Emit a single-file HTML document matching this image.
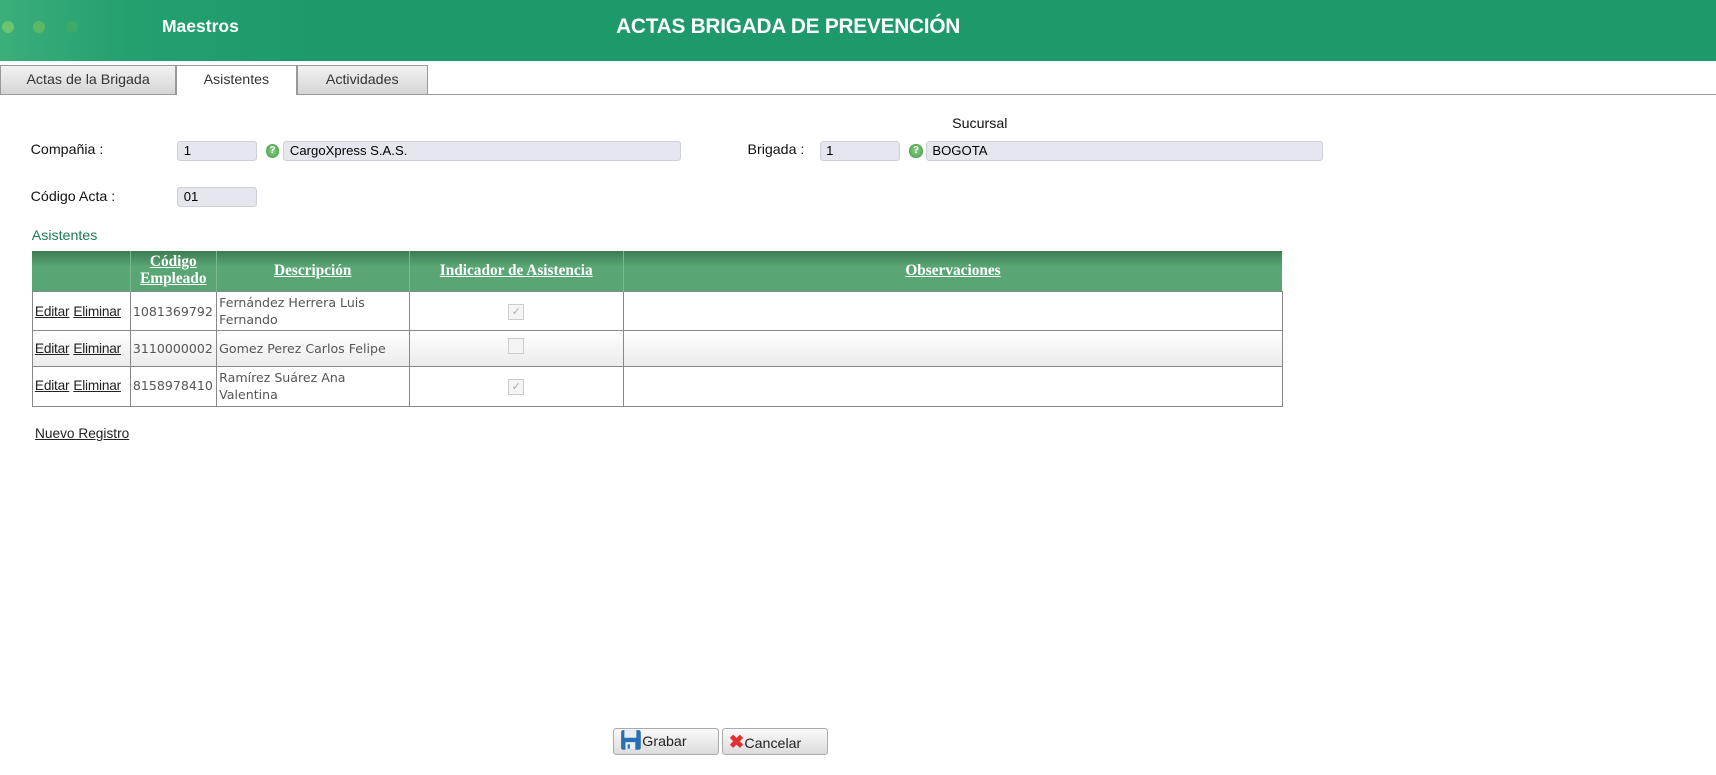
<!DOCTYPE html>
<html><head><meta charset="utf-8"><style>
html,body{margin:0;padding:0;background:#fff;overflow:hidden}
body{width:1716px;height:775px}
#w{zoom:1.0944;width:1568px;height:708px;position:relative;font-family:"Liberation Sans",sans-serif;font-size:13px;color:#111}
.a{position:absolute}
#hd{left:0;top:0;width:1568px;height:56px;background:linear-gradient(90deg,#3cae7a 0,#22a06e 120px,#1e9a6a 300px,#1e9a6a)}
.dot{width:11px;height:11px;border-radius:50%;top:19px}
.tab{top:59px;height:27px;border:1px solid #999;border-bottom:none;box-sizing:border-box;text-align:center;line-height:27px;font-size:13px;color:#333;background:linear-gradient(#f2f2f2,#d6d6d6)}
.inp{height:18px;background:#e6e6ef;border:1px solid #cfcfd8;border-radius:3px;box-sizing:border-box;font-size:12px;line-height:16px;padding-left:5px;color:#000}
.q{width:12px;height:12px;border-radius:50%;background:radial-gradient(#8fd08a,#3b9a3e);color:#fff;font-size:9px;font-weight:bold;text-align:center;line-height:12px}
table{border-collapse:collapse;position:absolute;left:29px;top:229px;width:1143px;table-layout:fixed}
th{background:linear-gradient(#3d7c52,#5aa774 40%,#57a572);color:#fff;font-family:"Liberation Serif",serif;font-weight:bold;font-size:14px;text-decoration:underline;height:37px;padding:0;border-left:1px solid #7ab890;line-height:15px}
td{border:1px solid #888;font-family:"DejaVu Sans",sans-serif;font-size:11.5px;color:#555;padding:0 2px;line-height:16px;overflow:hidden}
td a{color:#222;text-decoration:underline;font-family:"Liberation Sans",sans-serif;font-size:12.5px;letter-spacing:-0.2px}
.cb{display:inline-block;width:13px;height:13px;border:1px solid #ccc;background:#f4f4f4;color:#aaa;font-size:10px;line-height:13px;text-align:center}
.btn{top:665px;height:25px;border:1px solid #aaa;border-radius:3px;box-sizing:border-box;background:linear-gradient(#fafafa,#dcdcdc);font-size:13px;line-height:24px;color:#222}
</style></head><body><div id="w">
<div id="hd" class="a"></div>
<div class="a dot" style="left:2px;background:#6cc46e"></div>
<div class="a dot" style="left:30px;background:#5cb865"></div>
<div class="a dot" style="left:60px;background:#3eaa68"></div>
<div class="a" style="left:148px;top:15px;color:#fff;font-weight:bold;font-size:16px">Maestros</div>
<div class="a" style="left:563px;top:14px;color:#fff;font-weight:bold;font-size:19px;letter-spacing:-0.2px">ACTAS BRIGADA DE PREVENCIÓN</div>
<div class="a" style="left:0;top:86px;width:1568px;height:1px;background:#999"></div>
<div class="a tab" style="left:0;width:161px">Actas de la Brigada</div>
<div class="a tab" style="left:161px;width:110px;background:#fff;height:28px">Asistentes</div>
<div class="a tab" style="left:271px;width:120px">Actividades</div>
<div class="a" style="left:870px;top:106px;font-size:13px">Sucursal</div>
<div class="a" style="left:28px;top:130px">Compañia :</div>
<div class="a inp" style="left:162px;top:129px;width:73px">1</div>
<div class="a q" style="left:243px;top:132px">?</div>
<div class="a inp" style="left:259px;top:129px;width:363px">CargoXpress S.A.S.</div>
<div class="a" style="left:683px;top:130px">Brigada :</div>
<div class="a inp" style="left:749px;top:129px;width:73px">1</div>
<div class="a q" style="left:831px;top:132px">?</div>
<div class="a inp" style="left:846px;top:129px;width:363px">BOGOTA</div>
<div class="a" style="left:28px;top:173px">Código Acta :</div>
<div class="a inp" style="left:162px;top:171px;width:73px">01</div>
<div class="a" style="left:29px;top:208px;color:#1e7a50;font-size:13px">Asistentes</div>
<table>
<tr><th style="width:89px;border-left:none"></th><th style="width:78px">Código<br>Empleado</th><th style="width:175px">Descripción</th><th style="width:195px">Indicador de Asistencia</th><th>Observaciones</th></tr>
<tr style="height:36px"><td><a>Editar</a> <a>Eliminar</a></td><td>1081369792</td><td>Fernández Herrera Luis Fernando</td><td style="text-align:center"><span class="cb">✓</span></td><td></td></tr>
<tr style="height:32px;background:linear-gradient(#fff,#ebebeb)"><td><a>Editar</a> <a>Eliminar</a></td><td>3110000002</td><td>Gomez Perez Carlos Felipe</td><td style="text-align:center"><span class="cb"></span></td><td></td></tr>
<tr style="height:37px"><td><a>Editar</a> <a>Eliminar</a></td><td>8158978410</td><td>Ramírez Suárez Ana<br>Valentina</td><td style="text-align:center"><span class="cb">✓</span></td><td></td></tr>
</table>
<div class="a" style="left:32px;top:389px;text-decoration:underline;color:#222;font-size:12.5px">Nuevo Registro</div>
<div class="a btn" style="left:560px;width:97px"><svg width="20" height="20" viewBox="0 0 20 20" style="vertical-align:-5px;margin-left:6px"><rect x="1" y="1" width="18" height="18" rx="2" fill="#2a6fb0"/><rect x="4" y="1" width="11" height="7" fill="#e8eef5"/><rect x="5" y="12" width="9" height="7" fill="#e8eef5"/><rect x="7" y="14" width="2" height="4" fill="#2a6fb0"/></svg>Grabar</div>
<div class="a btn" style="left:660px;width:97px"><span style="color:#e23030;font-weight:bold;font-size:17px;margin-left:5px">✖</span>Cancelar</div>
</div></body></html>
